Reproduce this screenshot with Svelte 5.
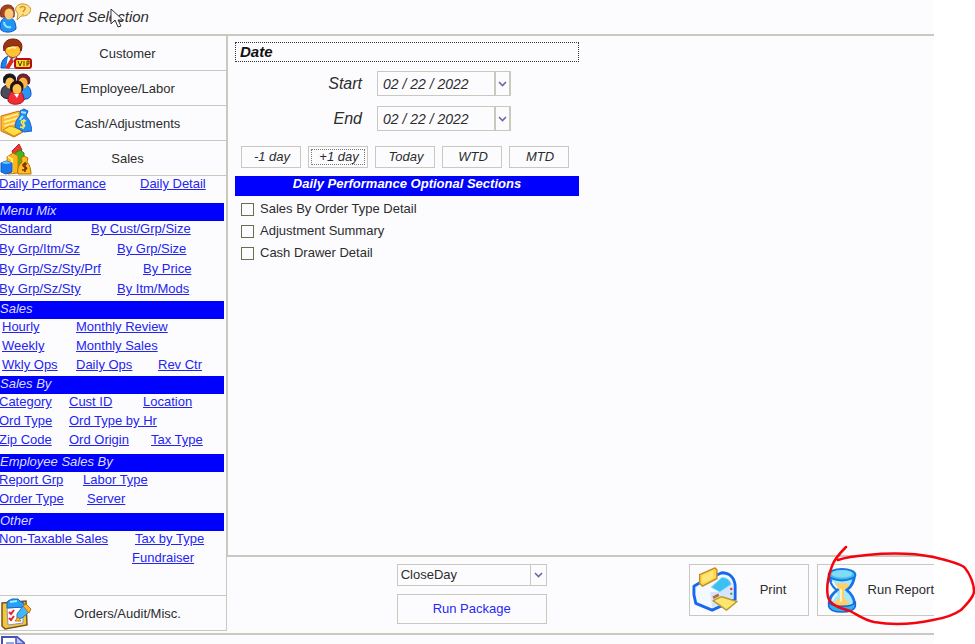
<script>
  let startDate = $state("02 / 22 / 2022");
  let endDate = $state("02 / 22 / 2022");
  let selectedPackage = $state("CloseDay");

  const ranges = ["-1 day", "+1 day", "Today", "WTD", "MTD"];

  let sections = $state([
    { name: "Sales By Order Type Detail", on: false },
    { name: "Adjustment Summary", on: false },
    { name: "Cash Drawer Detail", on: false },
  ]);

  // stops: where each link of a row starts, in px from the sidebar edge
  const groups = [
    {
      size: "top",
      rows: [{ stops: [0, 141], links: ["Daily Performance", "Daily Detail"] }],
    },
    {
      title: "Menu Mix",
      size: "tall",
      rows: [
        { stops: [0, 92], links: ["Standard", "By Cust/Grp/Size"] },
        { stops: [0, 118], links: ["By Grp/Itm/Sz", "By Grp/Size"] },
        { stops: [0, 144], links: ["By Grp/Sz/Sty/Prf", "By Price"] },
        { stops: [0, 118], links: ["By Grp/Sz/Sty", "By Itm/Mods"] },
      ],
    },
    {
      title: "Sales",
      rows: [
        { stops: [3, 77], links: ["Hourly", "Monthly Review"] },
        { stops: [3, 77], links: ["Weekly", "Monthly Sales"] },
        { stops: [3, 77, 159], links: ["Wkly Ops", "Daily Ops", "Rev Ctr"] },
      ],
    },
    {
      title: "Sales By",
      size: "roomy",
      rows: [
        { stops: [0, 70, 144], links: ["Category", "Cust ID", "Location"] },
        { stops: [0, 70], links: ["Ord Type", "Ord Type by Hr"] },
        { stops: [0, 70, 152], links: ["Zip Code", "Ord Origin", "Tax Type"] },
      ],
    },
    {
      title: "Employee Sales By",
      size: "roomy",
      rows: [
        { stops: [0, 84], links: ["Report Grp", "Labor Type"] },
        { stops: [0, 88], links: ["Order Type", "Server"] },
      ],
    },
    {
      title: "Other",
      rows: [
        { stops: [0, 136], links: ["Non-Taxable Sales", "Tax by Type"] },
        { stops: [133], links: ["Fundraiser"] },
      ],
    },
  ];

  const columns = (stops) =>
    stops.map((s, i) => (i < stops.length - 1 ? stops[i + 1] - s + "px" : "auto")).join(" ");
</script>

{#snippet customerIcon()}
  <svg class="icon" viewBox="0 0 32 32" aria-hidden="true">
    <path d="M1 30C1 22 5 18 11 18s10 4 10 12z" fill="#1484ee" stroke="#1648c8" />
    <path d="M8 18l4 4 4-4-1 12H6z" fill="#fff" />
    <path d="M11 20l3 3-5 8-4-1z" fill="#e22718" />
    <ellipse cx="13" cy="11" rx="8" ry="8.500" fill="#ffc436" stroke="#b84c10" />
    <path d="M4 13C2 5 7 1 13 1s11 4 8 12C20 8 18 7 15 8 10 9 7 7 4 13z" fill="#9c350f" stroke="#6c1e10" />
    <path d="M8 11c2-2 6-2 8-1" stroke="#fff08c" stroke-width="2" fill="none" />
    <rect x="15" y="21" width="16" height="9" rx="2" fill="#ffdc28" stroke="#b80b16" stroke-width="2" />
    <path d="M18 23l2 5 2-5M24 23v5M27 28v-5h2v3h-2" fill="none" stroke="#5a3000" />
  </svg>
{/snippet}

{#snippet employeeIcon()}
  <svg class="icon" viewBox="0 0 32 32" aria-hidden="true">
    <path d="M1 20c0-6 4-8 8-8s7 3 7 9l-3 5C6 26 1 25 1 20z" fill="#4b4b5c" stroke="#191926" />
    <path d="M17 20c0-6 3-8 7-8s7 3 7 9c0 4-4 6-10 5z" fill="#2796f4" stroke="#124dc6" />
    <path d="M4 10C2 3 6 1 10 1s7 3 5 9z" fill="#171720" stroke="#171720" />
    <path d="M18 10c-2-6 1-9 5-9s9 3 6 10z" fill="#75232b" stroke="#431329" />
    <ellipse cx="10" cy="10" rx="4.500" ry="5.500" fill="#ffc34d" />
    <ellipse cx="23" cy="10" rx="4.500" ry="5.500" fill="#ffb740" />
    <path d="M8 28c0-7 3-10 8-10s8 3 8 9c-2 5-13 6-16 1z" fill="#ef2e35" stroke="#af101d" />
    <path d="M11 18c-2-7 2-10 6-10s8 3 5 10z" fill="#241014" stroke="#241014" />
    <ellipse cx="17" cy="16" rx="4.500" ry="5" fill="#ffc34c" />
    <path d="M14 21l3 4 2-4" fill="#fff" />
  </svg>
{/snippet}

{#snippet cashIcon()}
  <svg class="icon" viewBox="0 0 32 32" aria-hidden="true">
    <path d="M1 8L19 3l4 4v17l-9 5L1 23z" fill="#ffbd2e" stroke="#c87012" />
    <path d="M4 10l14-4M4 14l14-4M4 18l14-4" stroke="#fff1a2" stroke-width="1.500" fill="none" />
    <path d="M3 22l7-4 10 3 2 3-8 4z" fill="#ffdf43" stroke="#d58a12" />
    <path d="M20 3l4-2 4 2-2 5c4 4 5 9 6 15l-8 1-9-5c0-5 2-8 5-11z" fill="#208ff0" stroke="#1b5cc5" />
    <path d="M21 4l5 1M20 12c1-3 2-3 3-4" stroke="#9be3ff" stroke-width="2" />
    <path d="M26 13c-5-2-6 2-3 3s2 4-3 3M24 11l-1 10" stroke="#ffe54a" stroke-width="1.500" fill="none" />
  </svg>
{/snippet}

{#snippet salesIcon()}
  <svg class="icon" viewBox="0 0 32 32" aria-hidden="true">
    <path d="M12 8l7-7 3 6-1 1v8h-6z" fill="#ed3a2c" stroke="#b8222b" />
    <path d="M15 10l5-3 4 3v14l-9 2z" fill="#48b51a" stroke="#298522" />
    <path d="M7 14l6-4 5 3v17l-10 1z" fill="#ffb51c" stroke="#cc740b" />
    <path d="M8 14l4 2v14" stroke="#fff080" stroke-width="2" fill="none" />
    <path d="M1 20l5-2 6 2v9l-6 2-5-2z" fill="#1677ee" stroke="#1456be" />
    <path d="M1 20l5 1 6-1-6-2z" fill="#68c7ff" />
    <path d="M21 15l3-2 4 2-1 4c3 3 4 8 4 12l-13 0c-1-6 1-9 4-12z" fill="#ffbd1e" stroke="#b66c0c" />
    <path d="M27 21c-5-1-5 2-2 3s2 3-3 3M25 19v10" stroke="#77310c" stroke-width="1.500" fill="none" />
  </svg>
{/snippet}

{#snippet ordersIcon()}
  <svg class="icon" viewBox="0 0 32 32" aria-hidden="true">
    <path d="M2 5l24-2 1 24-22 4-3-3z" fill="#f0c838" stroke="#79511a" stroke-width="1.500" />
    <path d="M7 10l16-1v16L8 27z" fill="#fff" stroke="#8c8cca" />
    <path d="M8 3l4-2h6l3 3 3 1v4L7 10V5z" fill="#28a0f5" stroke="#1762c6" />
    <path d="M10 4l7-1" stroke="#a0edff" stroke-width="2" />
    <path d="M9 14l2 2 3-4M9 20l2 2 3-4" stroke="#e3202b" stroke-width="2" fill="none" />
    <path d="M17 16l6-8 6 6-7 6-5 1z" fill="#42b8fa" stroke="#2471cd" />
    <path d="M23 8l3-2 5 5-2 4z" fill="#ffb528" stroke="#c2741d" />
    <path d="M15 23l3-4 3 4z" fill="#ffcc25" stroke="#bd7517" />
  </svg>
{/snippet}

{#snippet navRow(label, icon)}
  <button class="navRow" type="button">
    {@render icon()}
    <span>{label}</span>
  </button>
{/snippet}

{#snippet chevron()}
  <svg class="chevron" viewBox="0 0 9 6" aria-hidden="true">
    <path d="M1 1l3.500 3.500L8 1" fill="none" stroke="#6868a4" stroke-width="1.600" />
  </svg>
{/snippet}

<div class="screen">
  <header>
    <svg class="icon" viewBox="0 0 32 32" aria-hidden="true">
      <path d="M1 29c-2-8 1-12 6-13 6 0 9 5 9 12-4 4-11 4-15 1z" fill="#1f96f2" stroke="#1754c5" />
      <path d="M4 21c0 4 3 6 7 5" stroke="#92e0ff" stroke-width="2" fill="none" />
      <path d="M1 16C-1 7 3 4 8 4c5 0 7 4 6 12z" fill="#a3441f" stroke="#7b2d1b" />
      <ellipse cx="9" cy="13" rx="4.500" ry="5.500" fill="#ffc878" />
      <path d="M16 10c-2-4 3-8 8-7s8 4 6 8-6 4-9 4l-4 4 1-6z" fill="#ffdf88" stroke="#c99338" />
      <path d="M20 7c2-3 6-1 5 1l-2 3M23 13v1" stroke="#d79318" stroke-width="1.500" fill="none" />
    </svg>
    <h1>Report Selection</h1>
    <svg class="pointer" viewBox="0 0 14 20" aria-hidden="true">
      <path d="M1 1v15l4-4 3 7 3-1-3-6h5z" fill="#fcfcff" stroke="#333" />
    </svg>
  </header>

  <div class="body">
    <nav>
      {@render navRow("Customer", customerIcon)}
      {@render navRow("Employee/Labor", employeeIcon)}
      {@render navRow("Cash/Adjustments", cashIcon)}
      {@render navRow("Sales", salesIcon)}

      <div class="reports">
        {#each groups as group}
          <section class={group.size}>
            {#if group.title}
              <h2>{group.title}</h2>
            {/if}
            {#each group.rows as row}
              <div
                class="linkRow"
                style="padding-left: {row.stops[0]}px; grid-template-columns: {columns(row.stops)}"
              >
                {#each row.links as link}
                  <a href="#report">{link}</a>
                {/each}
              </div>
            {/each}
          </section>
        {/each}
      </div>

      {@render navRow("Orders/Audit/Misc.", ordersIcon)}
    </nav>

    <main>
      <div class="options">
        <h3>Date</h3>
        <div class="dates">
          <label for="start">Start</label>
          <div class="dateField">
            <input id="start" type="text" bind:value={startDate} />
            <button type="button" aria-label="Pick start date">{@render chevron()}</button>
          </div>
          <label for="end">End</label>
          <div class="dateField">
            <input id="end" type="text" bind:value={endDate} />
            <button type="button" aria-label="Pick end date">{@render chevron()}</button>
          </div>
        </div>
        <div class="ranges">
          {#each ranges as range}
            <button type="button" class:focused={range === "+1 day"}>{range}</button>
          {/each}
        </div>
        <h4>Daily Performance Optional Sections</h4>
        <div class="checks">
          {#each sections as section}
            <label><input type="checkbox" bind:checked={section.on} />{section.name}</label>
          {/each}
        </div>
      </div>

      <div class="toolbar">
        <div class="package">
          <div class="selectBox">
            <select aria-label="Package" bind:value={selectedPackage}>
              <option>CloseDay</option>
            </select>
            <span class="arrow">{@render chevron()}</span>
          </div>
          <button type="button">Run Package</button>
        </div>
        <div class="actions">
          <button type="button">
            <svg class="bigIcon" viewBox="0 0 48 48" aria-hidden="true">
              <path d="M2 20l7-4L31 6c8 0 13 5 14 13v15L21 45 4 38 2 29z" fill="#f4f8ff" stroke="#1768ef" stroke-width="3" stroke-linejoin="round" />
              <path d="M19 26l10 0 13-8 1 15-22 10z" fill="#d8e4ff" />
              <path d="M20 21l11-10c5 0 8 2 10 7l-12 8z" fill="#3cc0f4" stroke="#90def8" />
              <path d="M8 8l16-7 2 2v9L11 20l-3-3z" fill="#ffd84c" stroke="#c58a20" stroke-width="1.500" stroke-linejoin="round" />
              <path d="M11 9l11-5v8l-11 5z" fill="#ffe67a" />
              <path d="M22 32l6-3" stroke="#b67230" stroke-width="3" />
              <path d="M22 35l9-4 16 5-11 9z" fill="#ffe66c" stroke="#b99a35" stroke-width="1.500" stroke-linejoin="round" />
              <circle cx="41" cy="23" r="1.300" fill="#e33b32" />
              <circle cx="41" cy="28" r="1.300" fill="#38b552" />
            </svg>
            <span>Print</span>
          </button>
          <button type="button" class="run">
            <svg class="bigIcon slim" viewBox="0 0 32 48" aria-hidden="true">
              <path d="M3 8c0 9 4 13 8 16-5 4-9 8-8 15l3 4h20l3-4c0-7-3-11-8-15 5-4 8-8 8-16z" fill="#a6e8fb" stroke="#1874e4" stroke-width="3" />
              <path d="M8 19c5-3 11-3 16 0-2 3-6 4-6 6v7l6 6c-4 4-12 4-17 0l7-6v-7c0-3-4-3-6-6z" fill="#ffd06a" />
              <path d="M15 23v13" stroke="#fff4c0" stroke-width="2" />
              <ellipse cx="16" cy="8" rx="14" ry="6" fill="#42bce8" stroke="#1674e7" stroke-width="2" />
              <ellipse cx="16" cy="7" rx="11" ry="4" fill="#7fdcf2" />
              <path d="M2 36c1 4 6 5 14 5s13-1 14-5v5c-1 4-6 6-14 6S3 45 2 41z" fill="#32b3e8" stroke="#1665df" stroke-width="1.500" />
              <path d="M6 15c1 3 3 5 5 7M6 35c1-4 3-5 5-7" stroke="#effcff" stroke-width="2" fill="none" />
            </svg>
            <span>Run Report</span>
          </button>
        </div>
        <svg class="marker" viewBox="0 0 150 82" aria-hidden="true">
          <path
            d="M21 2C15 8 9 15 7 21 3 32 1 43 3 52c2 8 12 11 22 14 8 4 14 9 24 11 18 3 40 2 59-2 12-2 21-5 28-10 6-6 13-13 13-19 0-7-4-17-9-23-4-5-20-8-32-11-20-4-45-4-66-2-12 1-20 2-29 5"
          />
        </svg>
      </div>
    </main>
  </div>

  <footer>
    <svg class="icon" viewBox="0 0 32 32" aria-hidden="true">
      <path d="M2 1h15l7 6v24H2z" fill="#fff" stroke="#4b50b8" stroke-width="2" />
      <path d="M16 1v7h8" fill="#b8c6ff" stroke="#4b50b8" stroke-width="1.500" />
      <path d="M6 7h8M6 11h14" stroke="#93a6ea" stroke-width="2" />
    </svg>
  </footer>
</div>

<style>
  :global(body) {
    margin: 0;
    background: #fff;
  }

  .screen {
    --line: #c9c9c0;
    display: flex;
    flex-direction: column;
    height: 100vh;
    margin-right: 41px;
    background: #fcfcff;
    color: #2c2c2c;
    font: 13px/16px "Liberation Sans", Arial, sans-serif;
  }

  .screen * {
    box-sizing: border-box;
  }

  h1,
  h2,
  h3,
  h4 {
    margin: 0;
    font-weight: normal;
    font-style: italic;
  }

  button,
  input,
  select {
    margin: 0;
    padding: 0;
    color: inherit;
    font: inherit;
    background: none;
    border: 1px solid var(--line);
    border-radius: 0;
  }

  .icon {
    flex: none;
    width: 32px;
    height: 32px;
  }

  .chevron {
    width: 9px;
    height: 6px;
  }

  header {
    position: relative;
    display: flex;
    align-items: center;
    gap: 6px;
    height: 36px;
    flex: none;
    border-bottom: 2px solid var(--line);
  }

  h1 {
    font-size: 15px;
  }

  .pointer {
    position: absolute;
    left: 110px;
    top: 8px;
    width: 14px;
    height: 20px;
  }

  .body {
    flex: 1;
    display: flex;
    min-height: 0;
    border-bottom: 2px solid var(--line);
  }

  nav {
    flex: none;
    display: flex;
    flex-direction: column;
    width: 227px;
    margin-bottom: 2px;
    border-right: 1px solid var(--line);
  }

  .navRow {
    flex: none;
    display: flex;
    align-items: center;
    height: 35px;
    padding: 2px 3px 0 0;
    border: none;
    border-bottom: 1px solid var(--line);
  }

  .navRow span {
    flex: 1;
    text-align: center;
  }

  .reports {
    flex: 1;
    overflow: hidden;
    border-bottom: 1px solid var(--line);
  }

  .top {
    padding-bottom: 8px;
  }

  .roomy {
    padding-bottom: 3px;
  }

  h2 {
    height: 18px;
    margin-right: 2px;
    color: #dcdcff;
    font-size: 13px;
    line-height: 15px;
    background: #0000fe;
  }

  .linkRow {
    display: grid;
    padding-bottom: 3px;
    line-height: 16px;
    white-space: nowrap;
  }

  .tall .linkRow {
    padding-bottom: 4px;
  }

  .linkRow a {
    justify-self: start;
    margin-left: -1px;
    color: #2424f0;
  }

  main {
    flex: 1;
    display: flex;
    flex-direction: column;
    min-width: 0;
  }

  .options {
    flex: 1;
    padding: 6px 7px;
    border-left: 1px solid var(--line);
    border-bottom: 2px solid var(--line);
  }

  h3 {
    width: 344px;
    height: 20px;
    padding-left: 4px;
    color: #111;
    font-size: 15px;
    font-weight: bold;
    line-height: 18px;
    border: 1px dotted #333;
  }

  .dates {
    display: grid;
    grid-template-columns: 127px 134px;
    gap: 10px 15px;
    align-items: center;
    margin-top: 9px;
    font-size: 16px;
    font-style: italic;
  }

  .dates label {
    text-align: right;
  }

  .dateField {
    display: flex;
    height: 25px;
    border: 1px solid var(--line);
  }

  .dateField input {
    flex: 1;
    min-width: 0;
    padding-left: 5px;
    font-size: 14px;
    border: none;
  }

  .dateField button {
    display: flex;
    align-items: center;
    justify-content: center;
    width: 16px;
    border-width: 0 1px 0 2px;
  }

  .ranges {
    display: flex;
    gap: 7px;
    margin: 15px 0 0 6px;
  }

  .ranges button {
    width: 60px;
    height: 22px;
    padding-left: 2px;
    font-style: italic;
  }

  .ranges .focused {
    outline: 1px dotted #777;
    outline-offset: -4px;
  }

  h4 {
    width: 344px;
    height: 20px;
    margin-top: 8px;
    color: #fff;
    font-size: 13px;
    font-weight: bold;
    line-height: 16px;
    text-align: center;
    background: #0000fe;
  }

  .checks {
    display: flex;
    flex-direction: column;
    gap: 6px;
    margin: 5px 0 0 6px;
  }

  .checks label {
    display: flex;
    align-items: center;
    gap: 6px;
  }

  .checks input {
    appearance: none;
    width: 13px;
    height: 13px;
    border: 1px solid #6c6c50;
  }

  .checks input:checked {
    background: #6c6c50;
  }

  .toolbar {
    position: relative;
    flex: none;
    display: flex;
    align-items: flex-start;
    justify-content: space-between;
    height: 76px;
    padding: 7px 0 0 24%;
  }

  .package {
    display: flex;
    flex-direction: column;
    gap: 8px;
    width: 150px;
  }

  .package button {
    height: 30px;
    color: #2828f4;
  }

  .selectBox {
    position: relative;
    display: flex;
  }

  select {
    appearance: none;
    width: 100%;
    height: 22px;
    padding-left: 3px;
  }

  .arrow {
    position: absolute;
    right: 1px;
    top: 1px;
    bottom: 1px;
    display: flex;
    align-items: center;
    justify-content: center;
    width: 16px;
    border-left: 1px solid var(--line);
    pointer-events: none;
  }

  .actions {
    display: flex;
    gap: 8px;
  }

  .actions button {
    display: flex;
    align-items: center;
    width: 120px;
    height: 52px;
    padding-left: 2px;
  }

  .actions span {
    flex: 1;
    text-align: center;
    white-space: nowrap;
  }

  .actions .run {
    width: 117px;
    padding-left: 8px;
    border-right: none;
  }

  .actions .run span {
    text-align: right;
  }

  .bigIcon {
    flex: none;
    width: 46px;
    height: 46px;
  }

  .slim {
    width: 32px;
  }

  .marker {
    position: absolute;
    right: -41px;
    top: -12px;
    width: 150px;
    height: 82px;
    pointer-events: none;
  }

  .marker path {
    fill: none;
    stroke: #f4040c;
    stroke-width: 2.5;
    stroke-linecap: round;
    stroke-linejoin: round;
  }

  footer {
    flex: none;
    height: 9px;
    padding-top: 1px;
    overflow: hidden;
  }
</style>
